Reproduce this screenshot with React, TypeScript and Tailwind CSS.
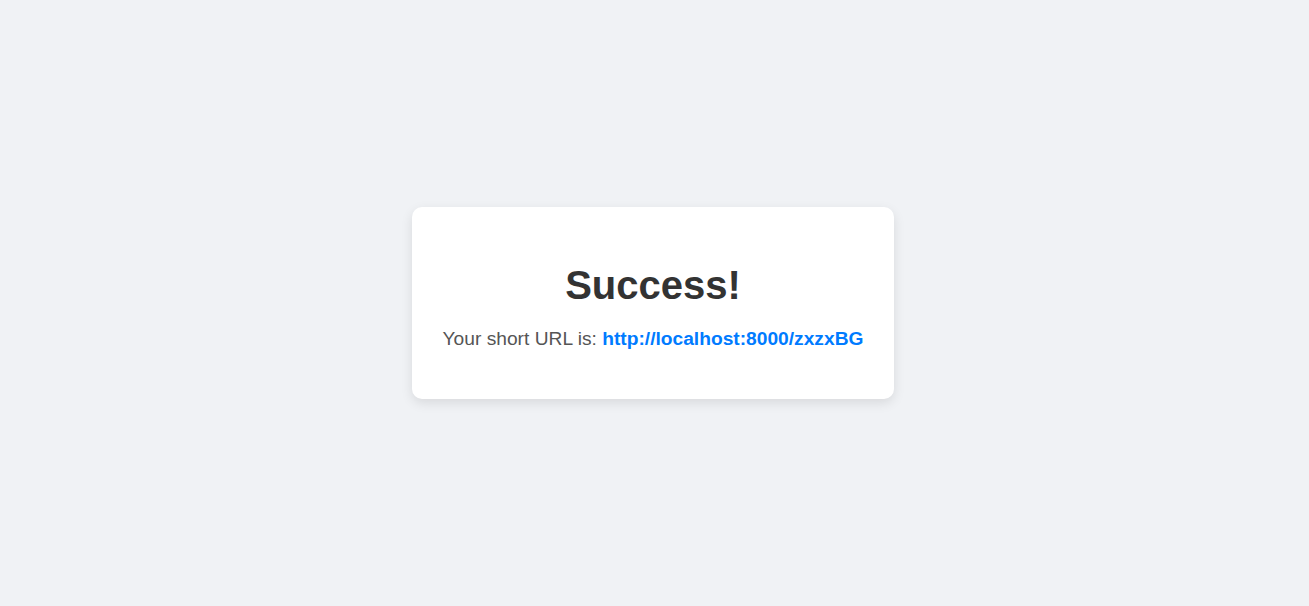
import React from "react";

export default function App() {
  return (
    <div
      className="w-full h-[606px] bg-[#f0f2f5] flex items-center justify-center pr-[3px]"
      style={{ fontFamily: '"Liberation Sans", Arial, sans-serif' }}
    >
      <div className="bg-white rounded-[10px] px-[30.5px] pt-[30px] pb-[30px] text-center shadow-[0_4px_12px_rgba(0,0,0,0.1)]">
        <h1 className="mt-[25px] text-[40px] leading-[46px] font-bold text-[#333333]">Success!</h1>
        <p className="mt-[20px] mb-[19px] text-[19.2px] leading-[22px] text-[#555555]">
          Your short URL is:{" "}
          <a href="#" className="font-bold text-[#007bff] no-underline">
            http://localhost:8000/zxzxBG
          </a>
        </p>
      </div>
    </div>
  );
}
